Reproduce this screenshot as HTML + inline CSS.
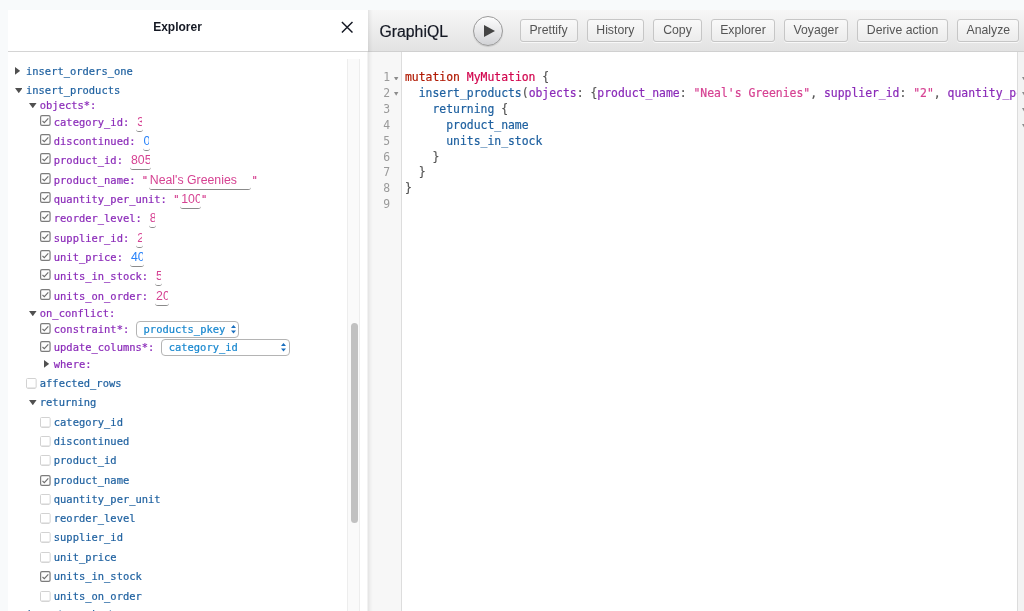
<!DOCTYPE html>
<html><head><meta charset="utf-8"><title>GraphiQL</title>
<style>
html,body{margin:0;padding:0;}
body{width:1024px;height:611px;overflow:hidden;background:#f8fafb;position:relative;font-family:"Liberation Sans", Arial, sans-serif;}
#exp{position:absolute;left:8px;top:10px;width:360px;height:601px;background:#fff;}
#exph{position:absolute;left:8px;top:10px;width:360px;height:41px;border-bottom:1px solid #d4d4d4;background:#fff;}
#exph .title{position:absolute;left:0;width:339px;top:9.5px;text-align:center;font-weight:bold;font-size:12px;line-height:14px;color:#141823;}
#exph .x{position:absolute;left:333.4px;top:10.9px}
.t{-webkit-text-stroke:0.2px;position:absolute;white-space:pre;font-family:"DejaVu Sans Mono", "Liberation Mono", monospace;font-size:10.45px;line-height:16px;height:16px;}
.t.f{color:#1f61a0} .t.a{color:#8b2bb9}
.ar{position:absolute;} .ar path{fill:#505050}
.cb{position:absolute;}
.in{-webkit-text-stroke:0;display:inline-block;position:relative;vertical-align:top;height:16px;margin-left:0.9px;font-family:"Liberation Sans", Arial, sans-serif;font-size:12.3px;line-height:16px;}
.in .v{display:block;margin:0 0.85px;height:16px;overflow:hidden;white-space:pre;position:relative;top:0px;}
.in::after{content:"";position:absolute;left:0;right:0;top:8px;height:9.4px;border-bottom:1px solid #8a8a8a;border-radius:0 0 3px 3px;}
.q{color:#d64292}
.sel{display:inline-block;box-sizing:border-box;height:16.8px;line-height:14.6px;vertical-align:top;margin-left:0.7px;border:1px solid #b4b4b4;border-radius:4px;color:#1787cf;padding-left:6.4px;position:relative;font-family:"DejaVu Sans Mono", "Liberation Mono", monospace;font-size:10.45px;background:#fff}
.sel svg{position:absolute;right:2.8px;top:3.0px}
#sbt{position:absolute;left:347px;top:59px;width:13px;height:552px;background:#fafafa;border-left:1px solid #ededed;border-right:1px solid #ededed;box-sizing:border-box}
#sbth{position:absolute;left:351px;top:323px;width:6.5px;height:200px;border-radius:3.5px;background:#c1c1c1}
#gq{position:absolute;left:368px;top:10px;width:656px;height:601px;background:#fff;}
#shad{position:absolute;left:367px;top:10px;width:6px;height:601px;background:linear-gradient(to right,rgba(0,0,0,0.05) 0,rgba(0,0,0,0.05) 1px,rgba(0,0,0,0.08) 1px,rgba(0,0,0,0.03) 3.4px,rgba(0,0,0,0) 6px);pointer-events:none}
#top{position:absolute;left:368px;top:10px;width:656px;height:41px;background:linear-gradient(#f7f7f7,#e2e2e2);border-bottom:1px solid #d0d0d0;white-space:nowrap;overflow:hidden}
#top .ttl{-webkit-text-stroke:0.2px;position:absolute;left:11.5px;top:13px;font-size:15.8px;line-height:18px;color:#141823;}
#exe{position:absolute;left:104.7px;top:5.5px;width:28px;height:28px;border-radius:50%;border:1px solid #9a9a9a;background:linear-gradient(#fdfdfd,#d2d3d6);box-shadow:0 1px 1px rgba(0,0,0,0.12);}
#exe svg{position:absolute;left:9.5px;top:7.2px}
#btns{position:absolute;left:0;top:9.4px;}
.btn{position:absolute;top:0;height:23px;box-sizing:border-box;border:1px solid #c6c6c6;border-radius:3px;background:linear-gradient(#f9f9f9,#ececec);color:#555;font-size:12.25px;line-height:20.5px;padding:0;text-align:center;white-space:nowrap;box-shadow:0 1px 0 rgba(255,255,255,0.7)}
#gut{position:absolute;left:368px;top:52px;width:33px;height:559px;background:#f7f7f7;border-right:1px solid #ddd}
#rgut{position:absolute;left:1017px;top:52px;width:7px;height:559px;background:#f3f3f3;border-left:1px solid #dcdcdc;box-sizing:border-box}
.ln{position:absolute;left:368px;width:22px;text-align:right;font-family:"DejaVu Sans Mono", "Liberation Mono", monospace;font-size:11.41px;line-height:16px;color:#9a9a9a}
.cl{-webkit-text-stroke:0.2px;position:absolute;left:405px;margin:0;font-family:"DejaVu Sans Mono", "Liberation Mono", monospace;font-size:11.41px;line-height:16px;white-space:pre;}
#codeclip{position:absolute;left:0;top:0;width:1017px;height:611px;overflow:hidden}
.fold{position:absolute}
.kw{color:#b11a04} .def{color:#d2054e} .pr{color:#1f61a0} .at{color:#8b2bb9} .st{color:#d64292} .p{color:#555}
#all{position:absolute;left:0;top:0;width:1024px;height:611px;will-change:transform;}
</style></head><body>
<div id="all">
<div id="exp"></div>
<div id="gq"></div>
<div id="gut"></div>
<div id="codeclip">
<div class="ln" style="top:69.4px">1</div>
<pre class="cl" style="top:69.4px"><span class="kw">mutation</span> <span class="def">MyMutation</span> <span class="p">{</span></pre>
<div class="ln" style="top:85.22px">2</div>
<pre class="cl" style="top:85.22px">  <span class="pr">insert_products</span><span class="p">(</span><span class="at">objects</span><span class="p">: {</span><span class="at">product_name</span><span class="p">: </span><span class="st">"Neal's Greenies"</span><span class="p">, </span><span class="at">supplier_id</span><span class="p">: </span><span class="st">"2"</span><span class="p">, </span><span class="at">quantity_per_unit</span><span class="p">: </span><span class="st">"100"</span><span class="p">}) {</span></pre>
<div class="ln" style="top:101.04px">3</div>
<pre class="cl" style="top:101.04px">    <span class="pr">returning</span> <span class="p">{</span></pre>
<div class="ln" style="top:116.86000000000001px">4</div>
<pre class="cl" style="top:116.86000000000001px">      <span class="pr">product_name</span></pre>
<div class="ln" style="top:132.68px">5</div>
<pre class="cl" style="top:132.68px">      <span class="pr">units_in_stock</span></pre>
<div class="ln" style="top:148.5px">6</div>
<pre class="cl" style="top:148.5px">    <span class="p">}</span></pre>
<div class="ln" style="top:164.32px">7</div>
<pre class="cl" style="top:164.32px">  <span class="p">}</span></pre>
<div class="ln" style="top:180.14000000000001px">8</div>
<pre class="cl" style="top:180.14000000000001px"><span class="p">}</span></pre>
<div class="ln" style="top:195.96px">9</div>
<pre class="cl" style="top:195.96px"></pre>
</div>
<div id="rgut"></div>
<svg class="fold" style="left:394.3px;top:76.5px" width="4.4" height="3.8" viewBox="0 0 4.4 3.8"><path d="M0 0 L4.4 0 L2.2 3.8 Z" fill="#8c8c8c"/></svg>
<svg class="fold" style="left:394.3px;top:92.32px" width="4.4" height="3.8" viewBox="0 0 4.4 3.8"><path d="M0 0 L4.4 0 L2.2 3.8 Z" fill="#8c8c8c"/></svg>
<svg class="fold" style="left:1021.8px;top:76.5px" width="4.4" height="3.8" viewBox="0 0 4.4 3.8"><path d="M0 0 L4.4 0 L2.2 3.8 Z" fill="#8c8c8c"/></svg>
<svg class="fold" style="left:1021.8px;top:92.32px" width="4.4" height="3.8" viewBox="0 0 4.4 3.8"><path d="M0 0 L4.4 0 L2.2 3.8 Z" fill="#8c8c8c"/></svg>
<svg class="fold" style="left:1021.8px;top:108.14px" width="4.4" height="3.8" viewBox="0 0 4.4 3.8"><path d="M0 0 L4.4 0 L2.2 3.8 Z" fill="#8c8c8c"/></svg>
<svg class="fold" style="left:1021.8px;top:123.96000000000001px" width="4.4" height="3.8" viewBox="0 0 4.4 3.8"><path d="M0 0 L4.4 0 L2.2 3.8 Z" fill="#8c8c8c"/></svg>
<div id="top">
<div class="ttl">GraphiQL</div>
<div id="exe"><svg width="13" height="14" viewBox="0 0 13 14"><path d="M1 1 L12 7 L1 13 Z" fill="#444"/></svg></div>
<div id="btns"><span class="btn" style="left:151.5px;width:58.0px">Prettify</span><span class="btn" style="left:218.6px;width:57.5px">History</span><span class="btn" style="left:285.3px;width:48.4px">Copy</span><span class="btn" style="left:343.1px;width:63.7px">Explorer</span><span class="btn" style="left:416.3px;width:63.5px">Voyager</span><span class="btn" style="left:489.2px;width:90.8px">Derive action</span><span class="btn" style="left:589.2px;width:62.3px">Analyze</span></div>
</div>
<div id="shad"></div>
<svg class="ar" style="left:15.1px;top:66.89999999999999px" width="5.2" height="7.8" viewBox="0 0 5.2 7.8"><path d="M0 0 L5.2 3.9 L0 7.8 Z"/></svg>
<div class="t f" style="left:26px;top:63px">insert_orders_one</div>
<svg class="ar" style="left:14.8px;top:88.0px" width="7.6" height="5.2" viewBox="0 0 7.6 5.2"><path d="M0 0 L7.6 0 L3.8 5.2 Z"/></svg>
<div class="t f" style="left:26px;top:82px">insert_products</div>
<svg class="ar" style="left:29.4px;top:103.0px" width="7.6" height="5.2" viewBox="0 0 7.6 5.2"><path d="M0 0 L7.6 0 L3.8 5.2 Z"/></svg>
<div class="t a" style="left:39.8px;top:97px">objects*:</div>
<svg class="cb" style="left:40.26px;top:115.20px" width="11" height="11" viewBox="0 0 11 11"><rect x="0.6" y="0.6" width="9.45" height="9.8" rx="1.4" fill="#fdfdfd" stroke="#7c7c7c" stroke-width="1.2"/><path d="M2.5 6.0 L4.3 7.7 L8.3 3.3" fill="none" stroke="#6e6e6e" stroke-width="1.1"/></svg>
<div class="t a" style="left:53.8px;top:114px">category_id: <span class="in" style="width:6.83px;color:#d64292"><span class="v">3</span></span></div>
<svg class="cb" style="left:40.26px;top:134.20px" width="11" height="11" viewBox="0 0 11 11"><rect x="0.6" y="0.6" width="9.45" height="9.8" rx="1.4" fill="#fdfdfd" stroke="#7c7c7c" stroke-width="1.2"/><path d="M2.5 6.0 L4.3 7.7 L8.3 3.3" fill="none" stroke="#6e6e6e" stroke-width="1.1"/></svg>
<div class="t a" style="left:53.8px;top:133px">discontinued: <span class="in" style="width:6.83px;color:#2882f9"><span class="v">0</span></span></div>
<svg class="cb" style="left:40.26px;top:153.20px" width="11" height="11" viewBox="0 0 11 11"><rect x="0.6" y="0.6" width="9.45" height="9.8" rx="1.4" fill="#fdfdfd" stroke="#7c7c7c" stroke-width="1.2"/><path d="M2.5 6.0 L4.3 7.7 L8.3 3.3" fill="none" stroke="#6e6e6e" stroke-width="1.1"/></svg>
<div class="t a" style="left:53.8px;top:152px">product_id: <span class="in" style="width:20.49px;color:#d64292"><span class="v">805</span></span></div>
<svg class="cb" style="left:40.26px;top:173.20px" width="11" height="11" viewBox="0 0 11 11"><rect x="0.6" y="0.6" width="9.45" height="9.8" rx="1.4" fill="#fdfdfd" stroke="#7c7c7c" stroke-width="1.2"/><path d="M2.5 6.0 L4.3 7.7 L8.3 3.3" fill="none" stroke="#6e6e6e" stroke-width="1.1"/></svg>
<div class="t a" style="left:53.8px;top:172px">product_name: <span class="q">"</span><span class="in" style="width:102.45px;color:#d64292"><span class="v">Neal's Greenies</span></span><span class="q">"</span></div>
<svg class="cb" style="left:40.26px;top:192.20px" width="11" height="11" viewBox="0 0 11 11"><rect x="0.6" y="0.6" width="9.45" height="9.8" rx="1.4" fill="#fdfdfd" stroke="#7c7c7c" stroke-width="1.2"/><path d="M2.5 6.0 L4.3 7.7 L8.3 3.3" fill="none" stroke="#6e6e6e" stroke-width="1.1"/></svg>
<div class="t a" style="left:53.8px;top:191px">quantity_per_unit: <span class="q">"</span><span class="in" style="width:20.49px;color:#d64292"><span class="v">100</span></span><span class="q">"</span></div>
<svg class="cb" style="left:40.26px;top:211.20px" width="11" height="11" viewBox="0 0 11 11"><rect x="0.6" y="0.6" width="9.45" height="9.8" rx="1.4" fill="#fdfdfd" stroke="#7c7c7c" stroke-width="1.2"/><path d="M2.5 6.0 L4.3 7.7 L8.3 3.3" fill="none" stroke="#6e6e6e" stroke-width="1.1"/></svg>
<div class="t a" style="left:53.8px;top:210px">reorder_level: <span class="in" style="width:6.83px;color:#d64292"><span class="v">8</span></span></div>
<svg class="cb" style="left:40.26px;top:231.20px" width="11" height="11" viewBox="0 0 11 11"><rect x="0.6" y="0.6" width="9.45" height="9.8" rx="1.4" fill="#fdfdfd" stroke="#7c7c7c" stroke-width="1.2"/><path d="M2.5 6.0 L4.3 7.7 L8.3 3.3" fill="none" stroke="#6e6e6e" stroke-width="1.1"/></svg>
<div class="t a" style="left:53.8px;top:230px">supplier_id: <span class="in" style="width:6.83px;color:#d64292"><span class="v">2</span></span></div>
<svg class="cb" style="left:40.26px;top:250.20px" width="11" height="11" viewBox="0 0 11 11"><rect x="0.6" y="0.6" width="9.45" height="9.8" rx="1.4" fill="#fdfdfd" stroke="#7c7c7c" stroke-width="1.2"/><path d="M2.5 6.0 L4.3 7.7 L8.3 3.3" fill="none" stroke="#6e6e6e" stroke-width="1.1"/></svg>
<div class="t a" style="left:53.8px;top:249px">unit_price: <span class="in" style="width:13.66px;color:#2882f9"><span class="v">40</span></span></div>
<svg class="cb" style="left:40.26px;top:269.20px" width="11" height="11" viewBox="0 0 11 11"><rect x="0.6" y="0.6" width="9.45" height="9.8" rx="1.4" fill="#fdfdfd" stroke="#7c7c7c" stroke-width="1.2"/><path d="M2.5 6.0 L4.3 7.7 L8.3 3.3" fill="none" stroke="#6e6e6e" stroke-width="1.1"/></svg>
<div class="t a" style="left:53.8px;top:268px">units_in_stock: <span class="in" style="width:6.83px;color:#d64292"><span class="v">5</span></span></div>
<svg class="cb" style="left:40.26px;top:289.20px" width="11" height="11" viewBox="0 0 11 11"><rect x="0.6" y="0.6" width="9.45" height="9.8" rx="1.4" fill="#fdfdfd" stroke="#7c7c7c" stroke-width="1.2"/><path d="M2.5 6.0 L4.3 7.7 L8.3 3.3" fill="none" stroke="#6e6e6e" stroke-width="1.1"/></svg>
<div class="t a" style="left:53.8px;top:288px">units_on_order: <span class="in" style="width:13.66px;color:#d64292"><span class="v">20</span></span></div>
<svg class="ar" style="left:29.4px;top:311.0px" width="7.6" height="5.2" viewBox="0 0 7.6 5.2"><path d="M0 0 L7.6 0 L3.8 5.2 Z"/></svg>
<div class="t a" style="left:39.8px;top:305px">on_conflict:</div>
<svg class="cb" style="left:40.26px;top:323.20px" width="11" height="11" viewBox="0 0 11 11"><rect x="0.6" y="0.6" width="9.45" height="9.8" rx="1.4" fill="#fdfdfd" stroke="#7c7c7c" stroke-width="1.2"/><path d="M2.5 6.0 L4.3 7.7 L8.3 3.3" fill="none" stroke="#6e6e6e" stroke-width="1.1"/></svg>
<div class="t a" style="left:53.8px;top:321px">constraint*: <span class="sel" style="width:103.3px;margin-top:0.4px">products_pkey<svg width="5" height="8.6" viewBox="0 0 5 8.6"><path d="M0 3.1 L2.5 0 L5 3.1 Z M0 5.5 L2.5 8.6 L5 5.5 Z" fill="#1a6fbe"/></svg></span></div>
<svg class="cb" style="left:40.26px;top:340.80px" width="11" height="11" viewBox="0 0 11 11"><rect x="0.6" y="0.6" width="9.45" height="9.8" rx="1.4" fill="#fdfdfd" stroke="#7c7c7c" stroke-width="1.2"/><path d="M2.5 6.0 L4.3 7.7 L8.3 3.3" fill="none" stroke="#6e6e6e" stroke-width="1.1"/></svg>
<div class="t a" style="left:53.8px;top:339px">update_columns*: <span class="sel" style="width:128.6px;margin-top:0.0px">category_id<svg width="5" height="8.6" viewBox="0 0 5 8.6"><path d="M0 3.1 L2.5 0 L5 3.1 Z M0 5.5 L2.5 8.6 L5 5.5 Z" fill="#1a6fbe"/></svg></span></div>
<svg class="ar" style="left:43.5px;top:359.90000000000003px" width="5.2" height="7.8" viewBox="0 0 5.2 7.8"><path d="M0 0 L5.2 3.9 L0 7.8 Z"/></svg>
<div class="t a" style="left:53.8px;top:356px">where:</div>
<svg class="cb" style="left:26.26px;top:378.00px" width="11" height="11" viewBox="0 0 11 11"><rect x="0.5" y="0.5" width="9.65" height="9.6" rx="1" fill="#fff" stroke="#d2d2d2"/><path d="M1.5 10.3 L9.2 10.3" stroke="#c4c4c4" stroke-width="0.6"/></svg>
<div class="t f" style="left:39.8px;top:375px">affected_rows</div>
<svg class="ar" style="left:29.4px;top:400.0px" width="7.6" height="5.2" viewBox="0 0 7.6 5.2"><path d="M0 0 L7.6 0 L3.8 5.2 Z"/></svg>
<div class="t f" style="left:39.8px;top:394px">returning</div>
<svg class="cb" style="left:40.26px;top:417.10px" width="11" height="11" viewBox="0 0 11 11"><rect x="0.5" y="0.5" width="9.65" height="9.6" rx="1" fill="#fff" stroke="#d2d2d2"/><path d="M1.5 10.3 L9.2 10.3" stroke="#c4c4c4" stroke-width="0.6"/></svg>
<div class="t f" style="left:53.8px;top:414px">category_id</div>
<svg class="cb" style="left:40.26px;top:436.10px" width="11" height="11" viewBox="0 0 11 11"><rect x="0.5" y="0.5" width="9.65" height="9.6" rx="1" fill="#fff" stroke="#d2d2d2"/><path d="M1.5 10.3 L9.2 10.3" stroke="#c4c4c4" stroke-width="0.6"/></svg>
<div class="t f" style="left:53.8px;top:433px">discontinued</div>
<svg class="cb" style="left:40.26px;top:455.10px" width="11" height="11" viewBox="0 0 11 11"><rect x="0.5" y="0.5" width="9.65" height="9.6" rx="1" fill="#fff" stroke="#d2d2d2"/><path d="M1.5 10.3 L9.2 10.3" stroke="#c4c4c4" stroke-width="0.6"/></svg>
<div class="t f" style="left:53.8px;top:452px">product_id</div>
<svg class="cb" style="left:40.26px;top:474.60px" width="11" height="11" viewBox="0 0 11 11"><rect x="0.6" y="0.6" width="9.45" height="9.8" rx="1.4" fill="#fdfdfd" stroke="#7c7c7c" stroke-width="1.2"/><path d="M2.5 6.0 L4.3 7.7 L8.3 3.3" fill="none" stroke="#6e6e6e" stroke-width="1.1"/></svg>
<div class="t f" style="left:53.8px;top:472px">product_name</div>
<svg class="cb" style="left:40.26px;top:494.10px" width="11" height="11" viewBox="0 0 11 11"><rect x="0.5" y="0.5" width="9.65" height="9.6" rx="1" fill="#fff" stroke="#d2d2d2"/><path d="M1.5 10.3 L9.2 10.3" stroke="#c4c4c4" stroke-width="0.6"/></svg>
<div class="t f" style="left:53.8px;top:491px">quantity_per_unit</div>
<svg class="cb" style="left:40.26px;top:513.10px" width="11" height="11" viewBox="0 0 11 11"><rect x="0.5" y="0.5" width="9.65" height="9.6" rx="1" fill="#fff" stroke="#d2d2d2"/><path d="M1.5 10.3 L9.2 10.3" stroke="#c4c4c4" stroke-width="0.6"/></svg>
<div class="t f" style="left:53.8px;top:510px">reorder_level</div>
<svg class="cb" style="left:40.26px;top:532.10px" width="11" height="11" viewBox="0 0 11 11"><rect x="0.5" y="0.5" width="9.65" height="9.6" rx="1" fill="#fff" stroke="#d2d2d2"/><path d="M1.5 10.3 L9.2 10.3" stroke="#c4c4c4" stroke-width="0.6"/></svg>
<div class="t f" style="left:53.8px;top:529px">supplier_id</div>
<svg class="cb" style="left:40.26px;top:552.10px" width="11" height="11" viewBox="0 0 11 11"><rect x="0.5" y="0.5" width="9.65" height="9.6" rx="1" fill="#fff" stroke="#d2d2d2"/><path d="M1.5 10.3 L9.2 10.3" stroke="#c4c4c4" stroke-width="0.6"/></svg>
<div class="t f" style="left:53.8px;top:549px">unit_price</div>
<svg class="cb" style="left:40.26px;top:570.60px" width="11" height="11" viewBox="0 0 11 11"><rect x="0.6" y="0.6" width="9.45" height="9.8" rx="1.4" fill="#fdfdfd" stroke="#7c7c7c" stroke-width="1.2"/><path d="M2.5 6.0 L4.3 7.7 L8.3 3.3" fill="none" stroke="#6e6e6e" stroke-width="1.1"/></svg>
<div class="t f" style="left:53.8px;top:568px">units_in_stock</div>
<svg class="cb" style="left:40.26px;top:591.10px" width="11" height="11" viewBox="0 0 11 11"><rect x="0.5" y="0.5" width="9.65" height="9.6" rx="1" fill="#fff" stroke="#d2d2d2"/><path d="M1.5 10.3 L9.2 10.3" stroke="#c4c4c4" stroke-width="0.6"/></svg>
<div class="t f" style="left:53.8px;top:588px">units_on_order</div>
<div class="t f" style="left:26px;top:606.2px">insert_products_one</div>
<div id="sbt"></div><div id="sbth"></div>
<div id="exph"><div class="title">Explorer</div>
<svg class="x" width="12.4" height="12.4" viewBox="0 0 12.4 12.4"><path d="M0.9 0.9 L11.5 11.5 M11.5 0.9 L0.9 11.5" stroke="#141823" stroke-width="1.45" fill="none"/></svg></div>
</div>
</body></html>
